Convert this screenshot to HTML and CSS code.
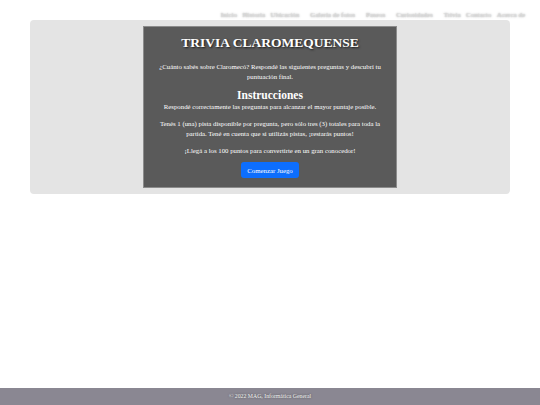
FILE: index.html
```html
<!DOCTYPE html>
<html lang="es">
<head>
<meta charset="utf-8">
<title>Trivia Claromequense</title>
<link rel="stylesheet" href="styles.css">
</head>
<body>
<header class="topbar">
  <nav class="nav">
    <a href="#">Inicio</a>
    <a href="#">Historia</a>
    <a href="#">Ubicación</a>
    <a href="#" class="wide">Galería de fotos</a>
    <a href="#" class="wide">Paseos</a>
    <a href="#" class="wide">Curiosidades</a>
    <a href="#" class="wide">Trivia</a>
    <a href="#">Contacto</a>
    <a href="#">Acerca de</a>
  </nav>
</header>
<main class="wrap">
  <section class="card">
    <h1 class="title">TRIVIA CLAROMEQUENSE</h1>
    <p class="intro">¿Cuánto sabés sobre Claromecó? Respondé las siguientes preguntas y descubrí tu puntuación final.</p>
    <h2 class="subtitle">Instrucciones</h2>
    <p class="rule first">Respondé correctamente las preguntas para alcanzar el mayor puntaje posible.</p>
    <p class="rule">Tenés 1 (una) pista disponible por pregunta, pero sólo tres (3) totales para toda la partida. Tené en cuenta que si utilizás pistas, ¡restarás puntos!</p>
    <p class="rule">¡Llegá a los 100 puntos para convertirte en un gran conocedor!</p>
    <button class="btn">Comenzar Juego</button>
  </section>
</main>
<footer class="footer">© 2022 MAG, Informática General</footer>
</body>
</html>
```
FILE: styles.css
```css
html, body {
  margin: 0;
  padding: 0;
}
body {
  min-height: 100vh;
  display: flex;
  flex-direction: column;
  font-family: "Liberation Serif", "Times New Roman", serif;
  background: #ffffff;
}
.topbar {
  height: 20px;
  display: flex;
  justify-content: flex-end;
  align-items: flex-end;
}
.nav {
  display: flex;
  padding-right: 15px;
  padding-bottom: 1px;
}
.nav a {
  font-size: 7px;
  color: #dedede;
  text-decoration: none;
  text-shadow: 0 0 2px #7a7a7a;
  margin-left: 5.5px;
  line-height: 8px;
}
.nav a.wide {
  margin-left: 11px;
}
.wrap {
  margin: 0 30px;
  background: #e4e4e4;
  border-radius: 4px;
  padding: 6px 0;
  display: flex;
  justify-content: center;
}
.card {
  width: 226px;
  background: #5a5a5a;
  border: 1px solid #8c8c8c;
  color: #ffffff;
  text-align: center;
  padding: 7px 13px 9px;
  display: flex;
  flex-direction: column;
  align-items: center;
}
.title {
  margin: 0 0 10px;
  font-size: 13.5px;
  font-weight: bold;
  line-height: 18px;
  text-shadow: 1px 1px 2px #1a1a1a;
}
.intro, .rule {
  margin: 0 0 7px;
  font-size: 6.8px;
  line-height: 10px;
}
.subtitle {
  margin: 0;
  font-size: 11.5px;
  font-weight: bold;
  line-height: 13px;
}
.btn {
  margin-top: -1px;
  background: #0d6efd;
  color: #ffffff;
  border: none;
  border-radius: 3px;
  font-family: "Liberation Serif", "Times New Roman", serif;
  font-size: 6.8px;
  height: 16px;
  padding: 0 6px;
  cursor: pointer;
}
.footer {
  margin-top: auto;
  height: 17px;
  background: #8a8792;
  color: #f4f4f4;
  font-size: 5.8px;
  line-height: 17px;
  text-align: center;
  text-shadow: 0 0 2px #444;
}
```
